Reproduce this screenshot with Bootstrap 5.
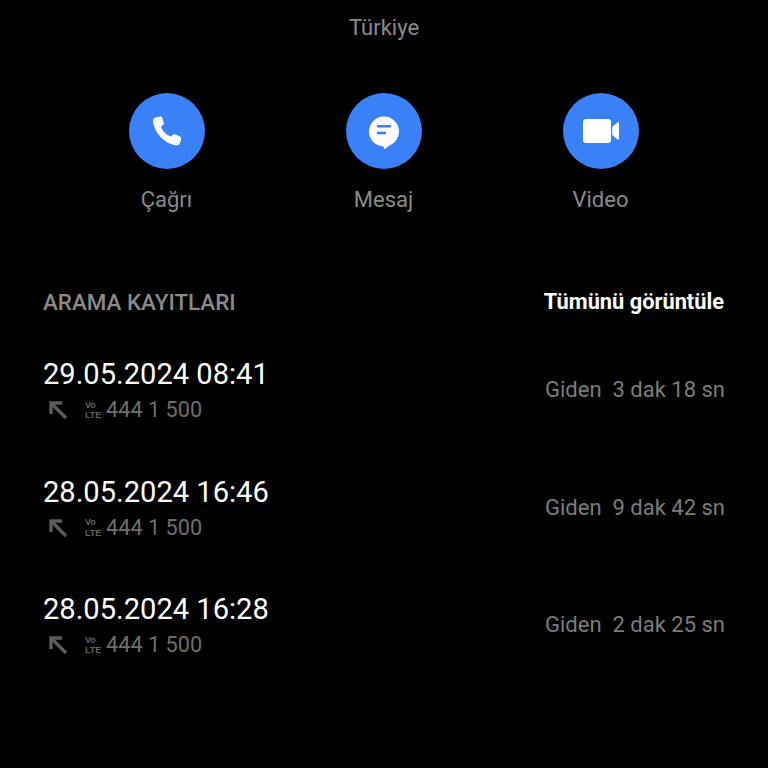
<!doctype html>
<html lang="tr">

<head>
    <meta charset="utf-8">
    <meta name="viewport" content="width=device-width, initial-scale=1">
    <title>Arama kayıtları</title>
    <link href="https://cdn.jsdelivr.net/npm/bootstrap@5.3.1/dist/css/bootstrap.min.css" rel="stylesheet">
    <script src="https://cdn.jsdelivr.net/npm/bootstrap@5.3.1/dist/js/bootstrap.bundle.min.js"></script>
    <style>
        body {
            background: #000;
            font-family: Roboto, "Liberation Sans", sans-serif;
            width: 768px;
            height: 768px;
            overflow: hidden;
        }

        .region-name {
            color: #8a8a8a;
            font-size: 22px;
            line-height: 26px;
            padding-top: 15px;
        }

        .action-row {
            margin-top: 52px;
            padding-right: 1px;
        }

        .action-item {
            width: 217px;
            color: #8a8a8a;
            font-size: 22px;
            line-height: 26px;
        }

        .action-circle {
            width: 76px;
            height: 76px;
            background: #3a80f6;
            margin-bottom: 18px;
        }

        .log-section {
            padding: 0 44px 0 43px;
            margin-top: 76px;
        }

        .log-title {
            color: #8a8a8a;
            font-size: 22.4px;
            line-height: 26px;
            font-weight: 500;
        }

        .log-all {
            color: #fff;
            font-size: 21.8px;
            line-height: 26px;
            font-weight: 700;
        }

        .log-row {
            height: 117.5px;
        }

        .log-list {
            margin-top: 42px;
        }

        .log-date {
            color: #fff;
            font-size: 29.1px;
            line-height: 34px;
        }

        .log-sub {
            color: #6e6e6e;
            font-size: 21.7px;
            line-height: 26px;
            margin-top: 6px;
        }

        .log-arrow {
            margin: 0 17px 0 5px;
        }

        .log-duration {
            color: #7c7c7c;
            font-size: 22px;
            line-height: 26px;
            white-space: pre;
            margin-top: 20px;
            margin-right: -1px;
        }

        .volte-mark {
            width: 18px;
            margin-right: 3px;
            color: #646464;
            font-family: "Liberation Sans Narrow", "Liberation Sans", sans-serif;
            font-size: 9px;
            line-height: 10.5px;
            font-weight: 700;
        }
    </style>
</head>

<body>
    <div class="region-name text-center">Türkiye</div>

    <div class="action-row d-flex justify-content-center text-center">
        <div class="action-item d-flex flex-column align-items-center">
            <div class="action-circle rounded-circle d-flex align-items-center justify-content-center">
                <svg width="30" height="30" viewBox="0 0 30 30">
                    <path fill="#fff" d="M3.500 1.500 8 .5C9 .3 9.800 .8 10.200 1.700L11.800 6.500C12.100 7.500 11.800 8.300 11 8.800L9 10.500C10.500 15 14 19 19 20.500L21 18.800C21.800 18.200 22.600 18.100 23.500 18.500L28 20.500C29 21 29.500 21.800 29.200 22.800L28 27C27.500 28.700 26 29.700 24 29.400 12 27.500 2.500 17 1 5.500.8 3.500 1.800 2 3.500 1.500Z"/>
                </svg>
            </div>
            Çağrı
        </div>
        <div class="action-item d-flex flex-column align-items-center">
            <div class="action-circle rounded-circle d-flex align-items-center justify-content-center">
                <svg width="32" height="36" viewBox="0 0 32 36">
                    <circle fill="#fff" cx="16" cy="18.500" r="15"/>
                    <path fill="#fff" d="M15 31h8l-6 5c-.5.300-1 0-1-.5Z"/>
                    <path fill="#3a80f6" d="M9 12h14v2.500H9zM9 18.700h9v2.500H9z"/>
                </svg>
            </div>
            Mesaj
        </div>
        <div class="action-item d-flex flex-column align-items-center">
            <div class="action-circle rounded-circle d-flex align-items-center justify-content-center">
                <svg width="36" height="24" viewBox="0 0 36 24">
                    <path fill="#fff" d="M3 0h22c1.700 0 3 1.300 3 3v18c0 1.700-1.300 3-3 3H3c-1.700 0-3-1.300-3-3V3C0 1.300 1.300 0 3 0ZM29.200 8 34.500 3.500c.6-.5 1.500-.2 1.500.7v15.600c0 .9-.9 1.200-1.500.7L29.200 16Z"/>
                </svg>
            </div>
            Video
        </div>
    </div>

    <div class="log-section">
        <div class="d-flex justify-content-between">
            <div class="log-title">ARAMA KAYITLARI</div>
            <div class="log-all">Tümünü görüntüle</div>
        </div>

        <div class="log-list" id="logList"></div>
    </div>

    <script>
        // call log rows
        var calls = [
            { date: '29.05.2024 08:41', duration: 'Giden  3 dak 18 sn' },
            { date: '28.05.2024 16:46', duration: 'Giden  9 dak 42 sn' },
            { date: '28.05.2024 16:28', duration: 'Giden  2 dak 25 sn' }
        ];

        document.getElementById('logList').innerHTML = calls.map((c) => `
            <div class="log-row d-flex justify-content-between">
                <div>
                    <div class="log-date">${c.date}</div>
                    <div class="log-sub d-flex align-items-center">
                        <svg class="log-arrow" width="20" height="20" viewBox="0 0 20 20">
                            <path fill="none" stroke="#5c5c5c" stroke-width="3.400" d="M3 14V3h11M3 3l15 15"/>
                        </svg>
                        <div class="volte-mark">Vo<br>LTE</div>
                        <div>444 1 500</div>
                    </div>
                </div>
                <div class="log-duration">${c.duration}</div>
            </div>`
        ).join('');
    </script>
</body>

</html>
